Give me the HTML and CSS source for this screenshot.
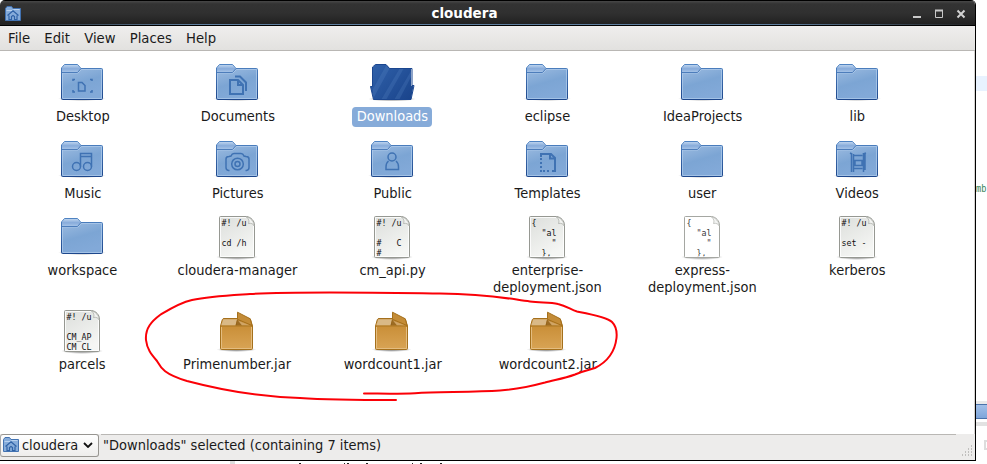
FILE: index.html
```
<!DOCTYPE html>
<html lang="en">
<head>
<meta charset="utf-8">
<title>cloudera</title>
<link rel="stylesheet" href="styles.css">
</head>
<body>
<svg class="defs" width="0" height="0" aria-hidden="true">
  <defs>
    <linearGradient id="gBody" x1="0" y1="0" x2=".35" y2="1"><stop offset="0" stop-color="#a3c0e3"/><stop offset=".6" stop-color="#7ca5d4"/><stop offset="1" stop-color="#82a9d8"/></linearGradient>
    <linearGradient id="gTab" x1="0" y1="0" x2="0" y2="1"><stop offset="0" stop-color="#bcd3ee"/><stop offset=".5" stop-color="#87abda"/><stop offset="1" stop-color="#a9c6e9"/></linearGradient>
    <linearGradient id="gEdge" x1="0" y1="0" x2="0" y2="1"><stop offset="0" stop-color="#4f83c2"/><stop offset="1" stop-color="#1d478c"/></linearGradient>
    <linearGradient id="gOpen" x1="0" y1="0" x2="1" y2="1"><stop offset="0" stop-color="#3365ae"/><stop offset="1" stop-color="#163f86"/></linearGradient>
    <linearGradient id="gDoc" x1="0" y1="0" x2=".5" y2="1"><stop offset="0" stop-color="#dcdedb"/><stop offset="1" stop-color="#f5f6f4"/></linearGradient>
    <linearGradient id="gBox" x1="0" y1="0" x2="0" y2="1"><stop offset="0" stop-color="#c4882f"/><stop offset="1" stop-color="#d9a455"/></linearGradient>
    <radialGradient id="gShade"><stop offset="0" stop-color="#000" stop-opacity=".6"/><stop offset="1" stop-color="#000" stop-opacity="0"/></radialGradient>
    <clipPath id="openClip"><path d="M5 28V8L7.500 5.500H18L22 9.500H43V27H45.500L43 40.500H5.500L2.500 27H5z"/></clipPath>
    <clipPath id="pageClip"><path d="M7 4H41V43.300H7z"/></clipPath>
    <symbol id="folder" viewBox="0 0 48 48">
      <ellipse cx="24" cy="39.500" rx="24" ry="2.500" fill="url(#gShade)"/>
      <path d="M3.500 39.500V9L6.500 5.500H19.500L23 9.500H43.500Q44.500 9.500 44.500 10.500V39.500Q44.500 40.500 43.500 40.500H4.500Q3.500 40.500 3.500 39.500z" fill="url(#gBody)" stroke="url(#gEdge)"/>
      <path d="M4.500 39V14H20L23.500 10.500H43.500V39.500H5" fill="none" stroke="#b5cfee" stroke-opacity=".65"/>
      <path d="M4 13.500V9.200L6.700 6H19.300L22.600 9.500L19.500 13.500z" fill="url(#gTab)"/>
      <path d="M4 13.500H19.500L23 9.500" fill="none" stroke="#4d7dbb"/>
    </symbol>
    <symbol id="page" viewBox="0 0 48 48">
      <ellipse cx="24" cy="44" rx="21" ry="3" fill="url(#gShade)"/>
      <path d="M7.500 3.500H33.500C38 4 41.500 8 41.500 12V43.500Q41.500 44.500 40.500 44.500H7.500Q6.500 44.500 6.500 43.500V4.500Q6.500 3.500 7.500 3.500z" stroke="#969892"/>
      <path d="M40.500 13V43.500H7.500V4.500H33" fill="none" stroke="#fff" stroke-opacity=".8"/>
      <path d="M33.500 4C36 6 36.500 8.500 35.500 10.500C38 9.800 40.500 11 41.300 13C41 8.500 37.500 4.500 33.500 4z" fill="#f2f3f1" stroke="#a5a7a2" stroke-width=".7"/>
    </symbol>
    <symbol id="jar" viewBox="0 0 48 48">
      <ellipse cx="23.500" cy="42.500" rx="20" ry="2.500" fill="url(#gShade)"/>
      <path d="M7.500 19L9.300 12.700Q9.800 11.500 11 11.500H36Q37 11.500 37.500 12.700L39.500 19V41.500Q39.500 42.500 38.500 42.500H8.500Q7.500 42.500 7.500 41.500z" fill="url(#gBox)" stroke="#a5701c"/>
      <path d="M8.200 18.500L10.300 12.300H24V13L22.500 18.500z" fill="#d9b987"/>
      <path d="M24 12.500V18.500H22.500z" fill="#94641d"/>
      <path d="M24 12.500L34 18.500H24z" fill="#9c6b22"/>
      <path d="M24.500 5.200L37.300 11.800L39 18.500L24.500 12.300z" fill="#c48c37" stroke="#a5701c"/>
      <path d="M25 13.500L37 18.500H29z" fill="#d0a566"/>
      <path d="M8 19H39" stroke="#a5701c" stroke-opacity=".8"/>
      <path d="M8.500 20V41.500H38.500V20" fill="none" stroke="#e4bd80"/>
    </symbol>
    <symbol id="home" viewBox="0 0 16 16">
      <path d="M.5 14.500V2.500L2 .5H6.500L8 2.500H15.500V14.500z" fill="#86acda" stroke="#4272b1"/>
      <path d="M1.500 4.500H7L8.500 3.500H14.500" fill="none" stroke="#b8d1ef"/>
      <path d="M2.500 9.500L8 4.800L13.500 9.500M4 9.500V13.500H6.500V10.500L8 9.500L9.500 10.500V13.500H12V9.500" fill="none" stroke="#2f62a6" stroke-width="1.200"/>
    </symbol>
  </defs>
</svg>

<div class="desktop">
  <section class="window">
    <header class="titlebar">
      <svg class="app-icon" width="16" height="16"><use href="#home"/></svg>
      <h1 class="title">cloudera</h1>
      <svg class="controls" width="54" height="10" viewBox="0 0 54 10">
        <path d="M0 8H8" stroke="#c9c9c9" stroke-width="2"/>
        <path d="M22.500 1V8.500H29.500V1" fill="none" stroke="#c9c9c9"/><path d="M22 1.500H30" stroke="#c9c9c9" stroke-width="2"/>
        <path d="M44.500 1.500L51.500 8.500M51.500 1.500L44.500 8.500" stroke="#d2d2d2" stroke-width="2"/>
      </svg>
    </header>
    <nav class="menubar"><div class="menus"><span>File</span><span>Edit</span><span>View</span><span>Places</span><span>Help</span></div></nav>
    <main class="files">
      <div class="item"><svg class="icon"><use href="#folder"/><g class="emblem"><path d="M15 22V20.500H17M32 20.500H34V22M15 31V33H17M32 33H34V31"/><path d="M20.500 23.500H24L27 26.500V32H20.500z"/></g></svg><span class="label">Desktop</span></div>
      <div class="item"><svg class="icon"><use href="#folder"/><g class="emblem wide"><path d="M17 21H25L30 26V35H17z"/><path d="M25 21V26H30M22 17.500H27L33 23.500V32"/></g></svg><span class="label">Documents</span></div>
      <div class="item selected"><svg class="icon"><ellipse cx="24" cy="40" rx="24" ry="2.500" fill="url(#gShade)"/><g clip-path="url(#openClip)"><path d="M0 0H48V48H0z" fill="url(#gOpen)"/><path d="M5 30L19 5H24L5 40zM13 41L32 9H36L18 41zM26 41L43 12V18L31 41z" fill="#6b96d1" opacity=".2"/></g><path d="M4.500 27V8L7.500 5.500H18L21.500 9.500H44V27M4.500 27.500H2.500L5.500 40.500H43L46 26.500H44" fill="none" stroke="#1b468f"/></svg><span class="label">Downloads</span></div>
      <div class="item"><svg class="icon"><use href="#folder"/></svg><span class="label">eclipse</span></div>
      <div class="item"><svg class="icon"><use href="#folder"/></svg><span class="label">IdeaProjects</span></div>
      <div class="item"><svg class="icon"><use href="#folder"/></svg><span class="label">lib</span></div>

      <div class="item"><svg class="icon"><use href="#folder"/><g class="emblem"><circle cx="18.500" cy="30.500" r="4"/><circle cx="29.500" cy="30.500" r="4"/><path d="M22.500 30.500V17.500H33.500V30.500M22.500 20.500H33"/></g></svg><span class="label">Music</span></div>
      <div class="item"><svg class="icon"><use href="#folder"/><g class="emblem"><path d="M16.500 34.500H15.500Q13 34 13 31.500V23Q13 20.500 16 20.500L18 20Q19 17.500 21 17.500H28Q30 17.500 31 20L33 20.500Q36 20.500 36 23V31.500Q36 34 33.500 34.500H32.500"/><circle cx="24.500" cy="28" r="5.800"/><circle cx="24.500" cy="28" r="2.500"/></g></svg><span class="label">Pictures</span></div>
      <div class="item"><svg class="icon"><use href="#folder"/><g class="emblem"><circle cx="24" cy="21" r="4"/><path d="M20.500 25Q18 27 18 31V33.500H30.500V31Q30.500 27 28 25"/></g></svg><span class="label">Public</span></div>
      <div class="item"><svg class="icon"><use href="#folder"/><g class="emblem wide"><path d="M18 21V18H28L32 22V35H29"/><path d="M27 18V22.500H32" /><path d="M18 22V36M20 35H28" stroke-dasharray="2 2"/></g></svg><span class="label">Templates</span></div>
      <div class="item"><svg class="icon"><use href="#folder"/></svg><span class="label">user</span></div>
      <div class="item"><svg class="icon"><use href="#folder"/><g class="emblem"><path d="M18.500 17V36M30.500 17V36M20.500 18V36M32 18V34M20.500 19.500H29.500M20.500 32.500H29.500M22 24.500H29V29.500H22z"/><path d="M17 17L19 18M33 17L30 18"/></g></svg><span class="label">Videos</span></div>

      <div class="item"><svg class="icon"><use href="#folder"/></svg><span class="label">workspace</span></div>
      <div class="item"><svg class="icon"><use href="#page" fill="url(#gDoc)"/><text class="code" x="8.500" y="13">#! /u</text><text class="code" x="8.500" y="33">cd /h</text></svg><span class="label">cloudera-manager</span></div>
      <div class="item"><svg class="icon"><use href="#page" fill="url(#gDoc)"/><g clip-path="url(#pageClip)"><text class="code" x="8.500" y="13">#! /u</text><text class="code" x="8.500" y="33">#   C</text><text class="code" x="8.500" y="43">#</text></g></svg><span class="label">cm_api.py</span></div>
      <div class="item"><svg class="icon"><use href="#page" fill="url(#gDoc)"/><g clip-path="url(#pageClip)"><text class="code" x="8.500" y="13">{</text><text class="code" x="8.500" y="23">  "al</text><text class="code" x="8.500" y="33">    "</text><text class="code" x="8.500" y="43">  },</text></g></svg><span class="label">enterprise-<br>deployment.json</span></div>
      <div class="item"><svg class="icon pale"><use href="#page" fill="#fff"/><g clip-path="url(#pageClip)"><text class="code" x="8.500" y="13">{</text><text class="code" x="8.500" y="23">  "al</text><text class="code" x="8.500" y="33">    "</text><text class="code" x="8.500" y="43">  },</text></g></svg><span class="label">express-<br>deployment.json</span></div>
      <div class="item"><svg class="icon"><use href="#page" fill="url(#gDoc)"/><text class="code" x="8.500" y="13">#! /u</text><text class="code" x="8.500" y="33">set -</text></svg><span class="label">kerberos</span></div>

      <div class="item"><svg class="icon"><use href="#page" fill="url(#gDoc)"/><g clip-path="url(#pageClip)"><text class="code" x="8.500" y="13">#! /u</text><text class="code" x="8.500" y="33">CM_AP</text><text class="code" x="8.500" y="43">CM_CL</text></g></svg><span class="label">parcels</span></div>
      <div class="item"><svg class="icon"><use href="#jar"/></svg><span class="label">Primenumber.jar</span></div>
      <div class="item"><svg class="icon"><use href="#jar"/></svg><span class="label">wordcount1.jar</span></div>
      <div class="item"><svg class="icon"><use href="#jar"/></svg><span class="label">wordcount2.jar</span></div>
    </main>
    <footer class="statusbar">
      <div class="location"><svg width="16" height="16"><use href="#home"/></svg><span>cloudera</span><svg width="10" height="6" viewBox="0 0 10 6"><path d="M1 1L5 5L9 1" fill="none" stroke="#111" stroke-width="1.800"/></svg></div>
      <div class="status"><span>"Downloads" selected (containing 7 items)</span></div>
      <svg class="grip" width="12" height="12"><path d="M10 1h1M7 4h1M10 4h1M4 7h1M7 7h1M10 7h1M1 10h1M4 10h1M7 10h1M10 10h1" stroke="#94928f" stroke-width="1.200"/></svg>
    </footer>
  </section>
  <aside class="behind">
    <div class="line-highlight"></div>
    <div class="code-fragment">mb</div>
    <div class="tab-strip"></div>
    <div class="panel-edge"></div>
    <div class="panel-button"></div>
  </aside>
  <svg class="below" width="976" height="3"><path d="M230 0h5v3h-5z" fill="#ddd"/><path d="M299 2.500h2M344 2.500h1M347 2.500h2M366 2.500h2M412 2.500h1M420 2.500h2M440 2.500h2" stroke="#222"/></svg>
  <svg class="annotation" width="987" height="464"><path d="M396 400C365 400 330 400 300 398C260 397 225 391 187 381C164 374 161 368 157 361C151 354 147 349 146 340C145 328 152 321 160 315C170 309 179 303 192 300C210 296 235 295 250 294C300 291 400 293 440 293.500C490 294 510 299 530 301.500C540 303 550 302 558 304C567 306 571 310 577 311.500C590 314 607 317 612 322C616 326 617 333 616.500 338C615 351 609 361 595 368C588 370 583 371 575 374.500C563 379 553 380 545 382.500C532 386 520 389 500 390.500C475 392 440 392 415 393.200C398 394 380 393.500 364 393.500"/></svg>
</div>
</body>
</html>
```
FILE: styles.css
```
* { box-sizing: border-box; }
body { margin: 0; background: #fff; font-family: "DejaVu Sans", sans-serif; font-size: 14px; color: #1a1a1a; }
.defs { position: absolute; }
.desktop { position: relative; display: grid; grid-template-columns: 976px 11px; grid-template-rows: 461px 3px; width: 987px; height: 464px; overflow: hidden; }
.window { display: flex; flex-direction: column; background: #fff; border-right: 1px solid #000; border-bottom: 1px solid #000; border-radius: 5px 5px 0 0; overflow: hidden; }

.titlebar { display: flex; flex: none; align-items: center; height: 26px; padding: 1px 8px 0 5px; border-top: 1px solid #000; border-bottom: 1px solid #000; background: linear-gradient(90deg, #222, #5f7f9f 20%, #5f7f9f 80%, #222) 0 100% / 100% 1px no-repeat, linear-gradient(#484848, #333 12%, #303030 50%, #202020); }
.title { flex: 1; margin: 0; padding: 0 10px 2px 0; text-align: center; font-size: 13.5px; line-height: 20px; color: #fff; transform: translateX(2.5px); }
.controls { flex: none; }
.menubar { flex: none; height: 25px; padding: 0 8px; line-height: 25px; background: linear-gradient(#efeeed, #e2e1df); border-bottom: 1px solid #b9b7b4; }
.menus { display: flex; gap: 15px; transform: scaleX(.945); transform-origin: left; }

.files { display: grid; flex: 1; grid-template-columns: repeat(6, 154px); grid-auto-rows: max-content; column-gap: 1px; row-gap: 9px; padding: 8px 0 0 5px; align-content: start; border-right: 1px solid #d5d3d1; }
.item { display: flex; flex-direction: column; align-items: center; }
.icon { width: 48px; height: 48px; overflow: visible; }
.label { padding: 1px 4px 2px 5px; border-radius: 4px; line-height: 17px; text-align: center; white-space: nowrap; transform: scaleX(.93); }
.selected .label { background: #86abd9; color: #fff; }
.emblem { fill: none; stroke: #3f72b3; stroke-width: 1.5; }
.emblem.wide { stroke-width: 2; }
.code { font: 8.3px "DejaVu Sans Mono", monospace; fill: #111; white-space: pre; }
.pale { opacity: .85; }

.statusbar { display: flex; flex: none; height: 26px; background: #edeceb; }
.location { display: flex; align-items: center; flex: none; gap: 3px; width: 99px; height: 23px; padding: 0 5px 2px 2px; border: 1px solid #979591; border-left-color: #aaa; border-radius: 3px; background: linear-gradient(#fff, #eeedec); }
.location span { flex: 1; width: 56px; line-height: 20px; transform: scaleX(.925); transform-origin: left; }
.location svg { flex: none; }
.status { width: 855px; margin-left: 2px; padding-left: 2px; line-height: 20px; border-top: 1px solid #b9b7b4; white-space: nowrap; }
.status span { display: inline-block; transform: scaleX(.93); transform-origin: left; }
.grip { align-self: flex-end; margin: 0 0 3px 5px; }

.behind { height: 461px; padding-top: 76px; overflow: hidden; }
.line-highlight { height: 15px; background: #e8f2ff; }
.code-fragment { width: 14px; height: 20px; margin-top: 88px; font: 11px/20px "DejaVu Sans Mono", monospace; color: #358058; transform: scaleX(.78); transform-origin: left; }
.tab-strip { height: 18px; margin-top: 202px; border-top: 3px solid #e9e9e9; background: linear-gradient(#4a72aa 0 1px, #a2c0e8 1px, #7ea5da 14px, #4a72aa 14px); }
.panel-edge { height: 4px; margin-top: 3px; background: #e2e2e2; }
.panel-button { height: 10px; margin: 14px 0 0 8px; border: 2px solid #ddd; border-right: 0; }
.annotation { position: absolute; inset: 0; pointer-events: none; }
.annotation path { fill: none; stroke: #fb0007; stroke-width: 2; stroke-linecap: round; }
```
